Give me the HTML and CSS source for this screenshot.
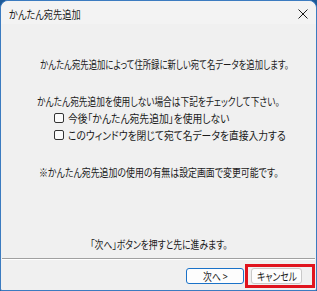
FILE: index.html
```html
<!DOCTYPE html>
<html lang="ja">
<head>
<meta charset="utf-8">
<link rel="stylesheet" href="styles.css">
</head>
<body>
<div class="window">
  <div class="titlebar">
    <span class="title"><span class="t left">かんたん宛先追加</span></span>
    <svg class="close" width="10" height="10" viewBox="0 0 10 10"><path d="M0.5 0.5 L9.5 9.5 M9.5 0.5 L0.5 9.5" stroke="#1a1a1a" stroke-width="1" fill="none"/></svg>
  </div>
  <div class="content">
    <p class="line l1"><span class="t s76">かんたん宛先追加によって住所録に新しい宛て名データを追加します。</span></p>
    <p class="line l2"><span class="t s79">かんたん宛先追加を使用しない場合は下記をチェックして下さい。</span></p>
    <label class="check c1"><span class="box"></span><span class="t left s89">今後「かんたん宛先追加」を使用しない</span></label>
    <label class="check c2"><span class="box"></span><span class="t left s89">このウィンドウを閉じて宛て名データを直接入力する</span></label>
    <p class="line l3"><span class="t s81">※かんたん宛先追加の使用の有無は設定画面で変更可能です。</span></p>
    <p class="line l4"><span class="t">「次へ」ボタンを押すと先に進みます。</span></p>
  </div>
  <div class="sep"></div>
  <div class="buttons">
    <button class="btn default"><span class="t">次へ&nbsp;&gt;</span></button>
    <button class="btn cancel"><span class="t">キャンセル</span></button>
  </div>
  <div class="highlight"></div>
</div>
</body>
</html>
```
FILE: styles.css
```css
html, body {
  margin: 0;
  padding: 0;
  background: #1d5a98;
}
body {
  width: 317px;
  height: 291px;
  overflow: hidden;
}
.window {
  position: relative;
  box-sizing: border-box;
  width: 317px;
  height: 291px;
  border: 1px solid #3b7bc0;
  border-radius: 8px 8px 2px 2px;
  background: #f0f0f0;
  display: flex;
  flex-direction: column;
  font-family: "Noto Sans CJK JP", sans-serif;
  font-feature-settings: "palt";
  font-size: 11px;
  color: #1a1a1a;
  overflow: hidden;
}
.t {
  display: inline-block;
  white-space: nowrap;
  transform: scaleX(0.8);
  transform-origin: center;
}
.t.left {
  transform-origin: left center;
}
.t.s76 { transform: scaleX(0.76); }
.t.s79 { transform: scaleX(0.79); }
.t.s81 { transform: scaleX(0.81); }
.t.s89 { transform: scaleX(0.89); }
.titlebar {
  height: 23px;
  background: #f3f3f3;
  display: flex;
  align-items: center;
  justify-content: space-between;
  padding: 0 8px 0 8px;
  border-radius: 7px 7px 0 0;
}
.title {
  font-size: 11.5px;
  line-height: 14px;
  margin-top: 3px;
}
.close {
  margin-top: 3px;
}
.content {
  flex: 1;
  display: flex;
  flex-direction: column;
}
.line {
  margin: 0;
  text-align: center;
  line-height: 16px;
  white-space: nowrap;
}
.l1 { margin-top: 32px; }
.l2 { margin-top: 21px; }
.l3 { margin-top: 21px; }
.l4 { margin-top: auto; margin-bottom: 6px; }
.check {
  display: flex;
  align-items: center;
  gap: 4px;
  height: 17px;
  padding-left: 53px;
  white-space: nowrap;
}
.box {
  flex: none;
  width: 8px;
  height: 8px;
  border: 1px solid #333;
  border-radius: 2px;
  background: #fbfbfb;
}
.sep {
  margin: 0 1px;
  height: 1px;
  background: #a0a0a0;
  border-bottom: 1px solid #ffffff;
}
.buttons {
  display: flex;
  justify-content: flex-end;
  gap: 7px;
  padding: 8px 14px 6px 0;
}
.btn {
  font-family: "Noto Sans CJK JP", sans-serif;
  font-feature-settings: "palt";
  font-size: 11px;
  line-height: 12px;
  height: 16px;
  padding: 0;
  background: #fdfdfd;
  border: 1px solid #c9c9c9;
  border-radius: 3px;
  color: #1a1a1a;
  white-space: nowrap;
  overflow: visible;
}
.btn.default {
  width: 58px;
  border-color: #1a72c8;
}
.btn.cancel {
  width: 51px;
}
.highlight {
  position: absolute;
  left: 244px;
  top: 263px;
  width: 64px;
  height: 18px;
  border: 3px solid #e0141e;
}
```
